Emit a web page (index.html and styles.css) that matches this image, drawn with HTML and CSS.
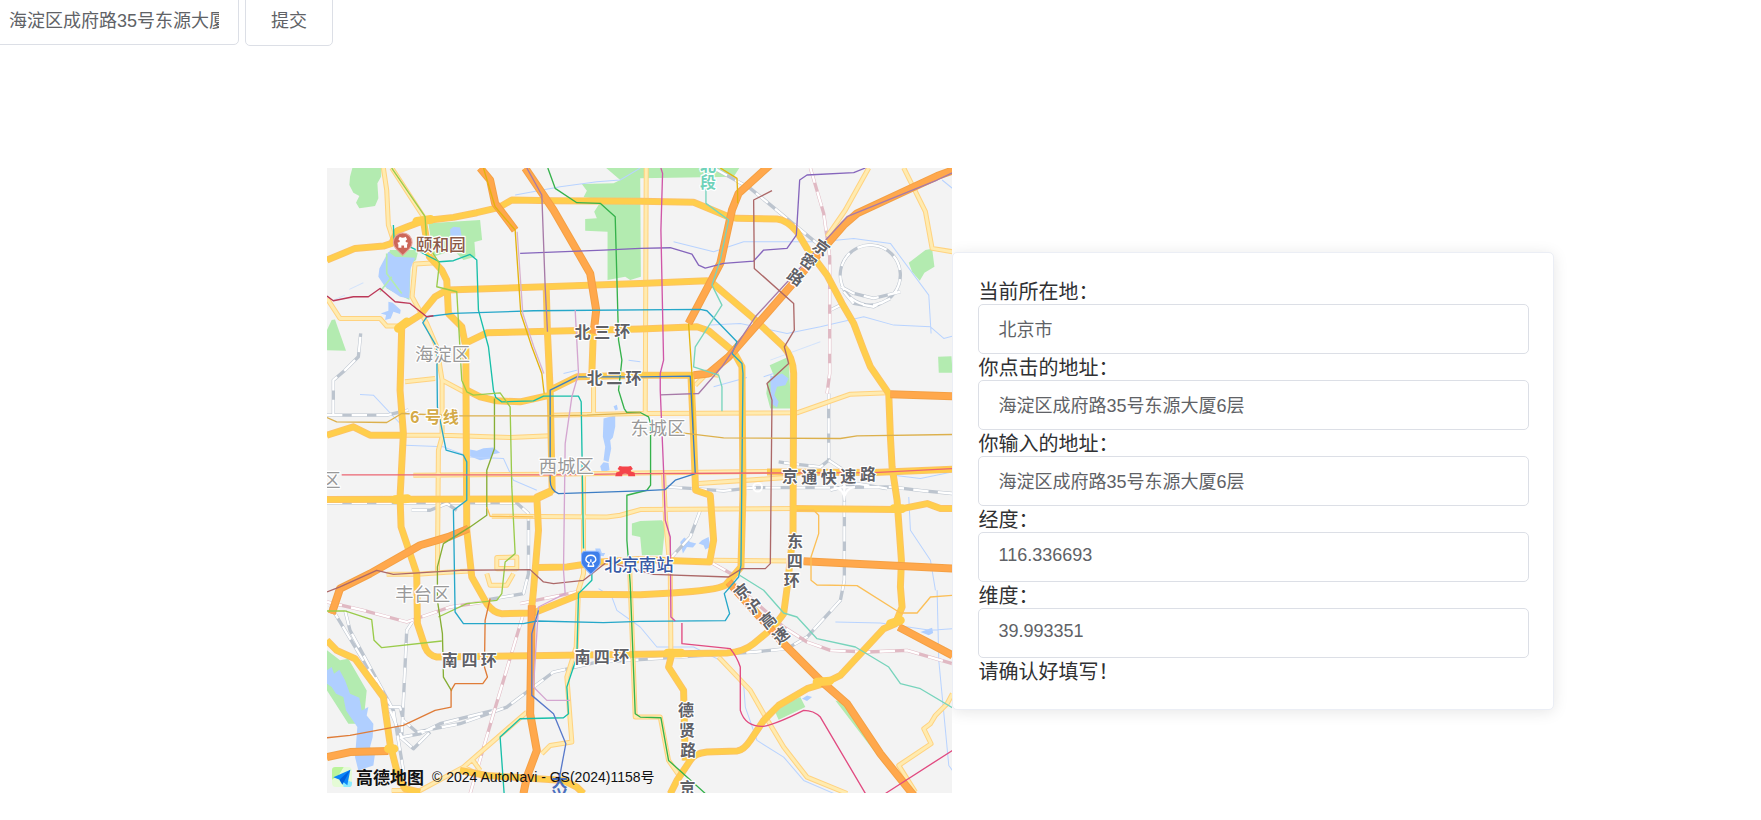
FILE: index.html
```html
<!DOCTYPE html>
<html lang="zh-CN">
<head>
<meta charset="utf-8">
<title>地址选择</title>
<link rel="stylesheet" href="styles.css">
</head>
<body>
<form class="search">
  <input class="field search-field" type="text" aria-label="地址" value="海淀区成府路35号东源大厦6层">
  <button class="search-button" type="button">提交</button>
</form>
<main class="content">
  <section class="map" aria-label="地图">
    <svg class="map-canvas" viewBox="21 24 1875 1875" role="img" aria-label="北京市地图">
      <defs>
        <g id="minor">
          <path d="M190 24L200 90L205 195L218 235M215 24L310 170M21 415L60 475L180 475L200 498L245 498M350 308L285 312L276 410L320 490L350 560L366 660L366 830L355 870L352 1235M255 665L345 655M366 660L435 697M255 825L370 825L570 832L690 827M695 765L960 760L1430 758L1590 702L1705 698M978 24L975 760M280 945L690 942L960 938L1400 933M515 1068L860 1070L900 1065L960 1048L1420 1045M790 945L790 1240L775 1290L768 1460L740 1550L755 1745L690 1755L665 1780M1030 940L1036 1080L1050 1230L1052 1480M927 1190L945 1670L1020 1670L1045 1800L1080 1850M1195 1490L1290 1590L1330 1660L1390 1760L1460 1850L1580 1899M1645 24L1575 150L1520 230M1750 24L1815 155L1835 265L1896 275M1896 1600L1880 1630L1845 1665L1830 1690L1810 1705L1832 1750L1735 1815L1785 1895M820 645L820 760M200 1242L292 1242L380 1236L450 1232M1135 970L1400 952M1180 1200L1415 1202M530 1192L590 1190L590 1225L530 1225ZM500 1240L510 1275L560 1275L580 1240M215 1890L300 1890L430 1820L620 1655M430 1820L490 1850M455 1795L480 1830M1125 675L1160 640L1195 645"/>
        </g>
        <g id="major">
          <path d="M21 300L105 265L190 258L215 250L232 212L262 200L310 182L400 172L470 158L535 143L575 120L700 122L960 124L1120 127L1225 170L1250 175L1370 177Q1400 180 1430 215L1460 265L1520 345L1565 430L1600 490L1630 570L1650 620L1705 700L1710 830L1715 920L1730 1020L1743 1200L1740 1280L1745 1340L1725 1390L1690 1405L1560 1545L1510 1570L1460 1585L1375 1635L1330 1680L1290 1740Q1270 1770 1250 1772L1160 1775Q1120 1780 1110 1800L1070 1860L1050 1900"/>
          <path d="M245 500L240 690L250 820L240 1010L243 1100L290 1240L292 1390L315 1460Q325 1485 350 1490L960 1482L1220 1478Q1270 1475 1300 1450L1360 1400L1390 1360L1402 1270L1418 1120L1420 640Q1418 590 1390 560L1300 475L1175 368L1160 362L960 370L380 390L345 410L300 465Z"/>
          <path d="M310 182L328 290L365 330L380 360L385 460L425 500L435 550L500 518L960 507L1130 500L1165 512L1240 575L1265 620L1268 1000L1262 1220L1215 1275Q1190 1290 1055 1298L960 1303L780 1302L640 1358L545 1360Q520 1358 500 1330L455 1250L440 1110L437 550"/>
          <path d="M690 690L770 650L960 645L1112 645L1118 780L1126 990L1170 1005L1180 1140L1168 1205L960 1198L840 1205L740 1220L655 1222M690 690L696 990L650 1010L655 1110L640 1290L635 1340M21 1018L650 1016L694 995M21 825L100 800L150 825L245 825M440 690L480 710L530 722L600 725L690 705M678 378L682 520L690 690M820 500L815 640M1420 1045L1730 1048L1820 1030L1860 1045L1896 1045M1340 935L1660 937L1896 927M21 1440L50 1470L105 1495L190 1610L210 1750L235 1850L255 1885L300 1895M420 1830L500 1845L730 1860L770 1880L790 1899M1055 1480L1045 1520L1090 1590L1095 1800"/>
        </g>
        <g id="express">
          <path d="M480 24L510 60L525 130L585 210M615 24L700 150L810 340L828 450L820 520M1350 14L1255 100L1235 150L1200 310L1105 490M1120 645L1165 640L1225 590L1340 460L1570 195L1610 160L1850 48L1900 30M445 1105L385 1130L300 1155L150 1240L60 1285L35 1360M21 1790L90 1775L205 1772M635 1335L630 1660L650 1770L620 1850L610 1899M1710 702L1896 708M1450 1203L1896 1225M1225 1265L1390 1450L1500 1560L1580 1630L1680 1780L1780 1905M1735 1400L1896 1485"/>
        </g>
        <g id="rail">
          <path d="M1180 24L1290 85L1490 250M1655 255A90 90 0 1 1 1565 375A90 90 0 0 1 1655 255M1562 380L1600 400L1660 415L1740 395M1570 395L1600 430L1660 440L1710 415M1530 450L1570 430M1525 700L1525 900L1500 920L1410 910L1375 905M1525 900L1570 930L1572 980L1572 1260L1560 1320L1460 1430L1400 1465L1300 1475L960 1498L830 1505L700 1535L560 1640L420 1690L290 1715L250 1680M1040 980L1120 985L1210 992L1300 982L1540 982L1710 980L1810 992L1896 1000M1530 990L1610 970L1700 985M21 765L200 765L265 750M40 765L40 660L75 630L115 590L122 520M21 1028L590 1028L625 1060L625 1240L610 1300L490 1320M275 1050L330 1050L380 1030L410 1050M30 1335L220 1650L250 1830M75 1350L90 1410L215 1640M280 1380L260 1410L245 1730M210 1650L245 1730L300 1720L360 1690L520 1650M240 1730L280 1765L330 1715M205 1640L240 1640L250 1680M1140 1050L1110 1130L1055 1190"/>
        </g>
        <g id="rail-pink">
          <path d="M1470 24L1510 160L1528 290L1528 640L1520 700M21 1325L130 1350L260 1385L390 1340L490 1325M600 1330L770 1295M610 1360L520 1660L450 1900M1230 1260L1390 1400L1460 1445L1530 1470L1640 1475L1760 1470L1896 1510M1175 1208L1250 1250"/>
        </g>
      </defs>

      <rect class="land" x="21" y="24" width="1875" height="1875"/>
      <g class="park">
        <path d="M97 24L185 24L183 50L172 70L175 115L165 138L140 142L118 145L108 128L118 108L100 98L88 75L90 50Z"/>
        <path d="M325 190L480 180L486 240L463 246L466 290L430 300L400 270L340 290Z"/>
        <path d="M210 270L295 270L288 300L272 312L268 420L200 385L185 330Z"/>
        <path d="M785 72L880 70L900 60L858 24L1257 24L1240 50L960 55L962 350L930 360L915 350L862 360L862 215L795 212L795 177L830 175L822 155L835 135L845 118L790 112L800 92Z"/>
        <path d="M35 480L45 478L78 572L21 570L21 510Z"/>
        <path d="M1765 308L1815 270L1835 266L1842 320L1812 338L1798 362L1775 335Z"/>
        <path d="M1853 590L1893 588L1896 638L1855 638Z"/>
        <path d="M1348 615L1405 590L1412 745L1350 745L1338 700L1342 665L1360 645Z"/>
        <path d="M935 1090L960 1082L1025 1080L1035 1095L1026 1185L965 1185L960 1130L935 1125Z"/>
        <path d="M21 1470L60 1500L85 1495L140 1590L130 1690L85 1690L21 1590Z"/>
        <path d="M1360 1645L1440 1610L1455 1640L1375 1678Z"/>
        <path d="M1545 1620L1585 1630L1640 1715L1735 1860L1690 1810Z"/>
      </g>
      <g class="water">
        <path d="M390 208L400 200L420 202L425 230L420 252L392 252ZM205 275L225 290L285 293L270 330L268 415L240 410L195 380L175 350L178 325ZM205 425L218 428L242 450L240 462L220 455L212 475L195 480L198 465L182 460L205 452Z"/>
        <path d="M850 775L885 765L885 800L878 832L870 840L873 865L865 905L850 900L855 860L848 830ZM840 918L850 906L865 908L868 930L845 936ZM450 868L470 872L490 864L520 862L540 878L520 882L510 895L480 900L450 888Z"/>
        <path d="M1350 645L1362 650L1385 640L1405 655L1395 675L1370 680L1362 705L1375 725L1370 742L1352 730ZM1080 1145L1092 1132L1110 1145L1128 1150L1118 1162L1100 1160L1088 1180ZM1135 1150L1145 1140L1165 1130L1170 1160L1155 1168L1150 1155Z"/>
        <path d="M21 1530L35 1520L42 1540L58 1528L75 1560L90 1600L118 1612L125 1650L145 1640L140 1665L160 1690L158 1730L150 1760L165 1780L160 1815L115 1830L105 1790L112 1700L78 1650L70 1610L48 1600L35 1580L21 1570Z"/>
        <path d="M825 1165L840 1165L845 1178L855 1178L850 1188L830 1185ZM1800 1415L1835 1402L1838 1418L1825 1425ZM1445 1615L1460 1605L1475 1610L1460 1622ZM880 738L890 734L893 748L885 750Z"/>
      </g>
      <path class="pond-path" d="M200 280L200 340L245 400M215 350L180 395"/>
      <path class="stream" d="M585 105L720 80L830 65L900 60L960 24M1060 245L1180 275L1270 245L1500 245L1600 235L1710 250L1825 405L1832 520M1170 495L1260 490L1400 520L1500 500L1630 470L1720 495L1830 500L1870 535L1896 528M120 703L160 705L240 790M255 855L370 860L450 890L550 895L580 960L650 990M730 640L770 630M1720 945L1800 955L1896 935M1765 1010L1770 1110L1830 1200L1845 1290M1545 1385L1680 1388L1830 1410L1896 1405M1850 1290L1855 1500L1885 1815L1896 1830M960 1400L1010 1460L1120 1460L1200 1500L1270 1570L1275 1640L1310 1740L1390 1790L1450 1860L1540 1899M835 1285L875 1310L890 1350L960 1400M1865 60L1896 85M925 600L960 605M1330 650L1360 640M1180 680L1280 652"/>
      <path class="stream faint" d="M40 420L75 405M88 388L130 368M1350 600L1500 545"/>
      <use class="rail-bed" href="#rail"/><use class="rail-dash" href="#rail"/>
      <use class="rail-bed pink" href="#rail-pink"/><use class="rail-dash" href="#rail-pink"/>
      <circle class="rail-loop" cx="1312" cy="981" r="13"/>
      <path class="rail-loop" d="M1540 980Q1572 985 1572 1020Q1572 985 1604 980M1572 960V1020"/>
      <use class="minor-case" href="#minor"/><use class="minor-fill" href="#minor"/>
      <use class="major-case" href="#major"/><use class="major-fill" href="#major"/>
      <use class="express-case" href="#express"/><use class="express-fill" href="#express"/>
      <path class="junction" d="M290 184L332 178M235 505L260 485M225 1018L262 1015M1042 1478L1083 1478M1710 1390L1740 1380M1490 1565L1528 1562M205 1765L222 1765M1720 1045L1745 1045"/>

      <g class="metro">
        <path stroke="#17bfa9" d="M220 195L222 238L300 275L358 305L400 302L450 283L470 300L475 450L505 560L520 690L527 712L545 725L640 722L670 708L775 708L783 725L790 1165M815 1235L815 1260L775 1300L770 1490L740 1580L745 1660L730 1672L600 1675L540 1730L552 1899"/>
        <path stroke="#35b24b" d="M683 24L705 85L770 128L840 130L885 170L895 540L905 600L895 690L912 745L920 757L960 757L985 770L991 790L991 975L980 990L920 1005L920 1140L930 1270L945 1660L960 1670L1022 1672L1045 1800L1155 1899"/>
        <path stroke="#9acb4a" d="M215 24L315 170L320 250L358 310L350 380L410 395L425 660L440 695L460 705L540 698L570 740L575 980L585 1180L555 1205L545 1300L530 1320L440 1330L355 1370M21 1352L75 1352L155 1378L162 1440L185 1462L365 1442"/>
        <path stroke="#86ae35" d="M523 715L523 865L500 930L500 1065L450 1100L370 1150L352 1220L352 1320L367 1420L370 1550L395 1592"/>
        <path stroke="#df7c38" d="M510 1315L495 1380L493 1520L502 1550L488 1570L405 1570L393 1590L393 1640L345 1650L250 1695L90 1725L21 1732"/>
        <path stroke="#25a7c9" d="M320 470L308 488L350 560L352 740L372 840L378 870L430 885L440 905L440 1020L400 1050L405 1355L430 1390L610 1390L650 1382L850 1387L960 1383L1215 1381L1228 1360L1212 1300L1255 1250L1262 1215L1268 640L1265 610L1235 580L1250 545L1160 452L1140 448L640 452L400 460Z"/>
        <path stroke="#bc3858" d="M21 408L40 422L100 410L145 410L180 385L225 425L270 430L320 470L340 467"/>
        <path stroke="#8565bc" d="M600 280L850 270L960 265L1050 263L1115 282L1135 315L1155 324L1210 310L1300 303L1330 270L1400 265L1428 225L1438 60L1460 45L1600 38L1635 24"/>
        <path stroke="#a77aa8" d="M620 24L665 105L675 380L682 515M1020 704L1135 700L1205 620L1305 470L1580 170L1850 60L1896 38"/>
        <path stroke="#cf56a8" d="M1022 24L1027 40L1022 210L1030 600L1020 640L1020 690L1030 930L1035 1080L1050 1130L1052 1370L1065 1382"/>
        <path stroke="#e14a80" d="M1085 1388L1085 1450L1230 1465Q1250 1490 1260 1520L1260 1650Q1275 1700 1330 1698Q1370 1690 1450 1650Q1480 1650 1500 1670L1635 1899M1695 1899L1896 1770"/>
        <path stroke="#d9b3cf" d="M591 215L608 460L641 560L671 640"/>
        <path stroke="#e3b30d" d="M1200 24L1250 55L1252 100L1252 130M1105 490L1115 640L1120 810M490 24L525 140L585 210L602 460L635 560L665 640L672 700"/>
        <path stroke="#77d4bc" d="M1157 60L1157 130L1225 180L1200 300L1175 375L1205 435L1125 560L1120 620L1195 645L1205 680L1205 753M1258 1245L1330 1290L1390 1358L1430 1370L1490 1435L1605 1460L1705 1520L1740 1570L1800 1585L1896 1642"/>
        <path stroke="#ac6868" d="M1355 92L1300 120L1302 325L1420 430L1422 510L1392 560L1405 610L1340 670L1355 720L1350 1210L1335 1225L1265 1225L1225 1250L1000 1242L860 1205L790 1260L700 1270L670 1265L630 1228L420 1230L220 1242L170 1230L60 1280L21 1295"/>
        <path stroke="#3c7dc4" d="M690 690L770 650L960 650L1110 648L1125 940L1065 960L1035 988L960 992L715 1000Q690 990 690 960Z"/>
        <path stroke="#eb6673" d="M65 944L700 944L960 940L1660 937L1896 925"/>
        <path stroke="#dcb04c" d="M21 772L50 785L200 787L245 760L420 767L690 767L800 765L960 758M1060 815L1210 833L1560 835L1610 827L1896 823"/>
        <path stroke="#fbbf57" d="M500 1040L510 1068L640 1070M1430 1050L1480 1050L1495 1065L1495 1120L1472 1190L1472 1260L1490 1274L1610 1276L1740 1358L1790 1358L1830 1310L1896 1305"/>
        <path stroke="#d4a6d0" d="M765 450L775 640L755 710L735 850L730 1230L735 1300L655 1340L640 1580L680 1620L750 1620"/>
        <path stroke="#5879ca" d="M655 1350L635 1420L635 1605L700 1660L737 1750L720 1840"/>
      </g>

      <g class="landmark">
        <path fill="#cc675a" stroke="#e7a49a" stroke-width="3" d="M248 286L230 268A28 28 0 1 1 266 268Z"/>
        <path fill="#fff" d="M239 230Q248 236 257 230L261 238L257 241V246L264 248L261 254V263H252V256H244V263H235V254L232 248L239 246V241L235 238Z"/>
        <path fill="#3e7eea" stroke="#8ab4ff" stroke-width="3" d="M796 1173L828 1173Q840 1173 840 1185L840 1208Q840 1215 812 1242Q784 1215 784 1208L784 1185Q784 1173 796 1173Z"/>
        <path fill="none" stroke="#fff" stroke-width="4" d="M803 1218L807 1208Q797 1204 797 1198Q798 1185 812 1185Q826 1185 827 1198Q827 1204 817 1208L821 1218M802 1218H822M812 1197V1206"/>
        <path fill="#f4444a" d="M898 917Q915 921 932 917L938 926L932 930V934L943 937L945 948H924V943Q915 934 906 943V948H885L888 937L898 934V930L892 926Z"/>
      </g>

      <g class="district">
        <text x="285" y="602">海淀区</text>
        <text x="656" y="938">西城区</text>
        <text x="931" y="824">东城区</text>
        <text x="226" y="1323">丰台区</text>
        <text x="62" y="980" text-anchor="end">区</text>
      </g>
      <text class="poi" x="287" y="274">颐和园</text>
      <text class="station" x="852" y="1231">北京南站</text>
      <text class="line-name" x="270 315 368" y="788">6号线</text>
      <text class="mint-name" x="1139" y="34">北</text>
      <text class="mint-name" x="1139" y="84">段</text>
      <text class="rail-name" x="694 694" y="1880 1926">大兴</text>
      <g class="road-name">
        <text x="763 822 882" y="535 534 532">北三环</text>
        <text x="800 858 916" y="673">北二环</text>
        <text x="1385 1443 1501 1560 1619" y="964 967 967 965 960">京通快速路</text>
        <text x="365 424 482" y="1516">南四环</text>
        <text x="763 821 879" y="1509 1507 1505">南四环</text>
        <text x="1400 1399 1390" y="1160 1220 1277">东四环</text>
        <text x="1073 1076 1080" y="1668 1728 1786">德贤路</text>
        <text x="1078" y="1902">京</text>
        <text transform="rotate(35 1503 263)" x="1479" y="280">京</text>
        <text transform="rotate(35 1463 305)" x="1439" y="322">密</text>
        <text transform="rotate(35 1426 352)" x="1402" y="369">路</text>
        <text transform="rotate(-38 1266 1295)" x="1242" y="1312">京</text>
        <text transform="rotate(-38 1303 1338)" x="1279" y="1355">沪</text>
        <text transform="rotate(-38 1343 1381)" x="1319" y="1398">高</text>
        <text transform="rotate(-38 1382 1426)" x="1358" y="1443">速</text>
      </g>
    </svg>
    <div class="attribution">
      <svg class="brand-mark" viewBox="0 0 60 60" aria-hidden="true">
        <rect width="60" height="60" rx="12" fill="#e5fbd6"/>
        <path fill="#baf49b" d="M10 0H35L20 25L0 38V10Q0 0 10 0Z"/>
        <path fill="#8cebff" d="M28 35L60 45V50Q60 60 50 60H35Z"/>
        <path fill="#0c86f8" d="M55 8L4 31L27 40L46 55Z"/>
        <path fill="#0060dc" d="M55 8L22 38L31 53Z"/>
      </svg>
      <span class="brand-name">高德地图</span>
      <span class="copyright">© 2024 AutoNavi - GS(2024)1158号</span>
    </div>
  </section>
  <form class="card">
    <label class="label" for="city">当前所在地：</label>
    <input class="field" id="city" type="text" value="北京市">
    <label class="label" for="clicked">你点击的地址：</label>
    <input class="field" id="clicked" type="text" value="海淀区成府路35号东源大厦6层">
    <label class="label" for="typed">你输入的地址：</label>
    <input class="field" id="typed" type="text" value="海淀区成府路35号东源大厦6层">
    <label class="label" for="lng">经度：</label>
    <input class="field" id="lng" type="text" value="116.336693">
    <label class="label" for="lat">维度：</label>
    <input class="field" id="lat" type="text" value="39.993351">
    <p class="label">请确认好填写！</p>
  </form>
</main>
</body>
</html>
```
FILE: styles.css
```css
* { box-sizing: border-box; }

body {
  margin: 0;
  background: #fff;
  color: #303133;
  font-family: "Liberation Sans", "Noto Sans CJK SC", sans-serif;
  overflow-x: hidden;
}

.search {
  display: flex;
  align-items: flex-start;
  gap: 6px;
  margin: -5px 0 0 -11px;
}

.field,
.search-button {
  height: 50px;
  border: 1px solid #dcdfe6;
  border-radius: 5px;
  background: #fff;
  color: #606266;
  font: 18px "Liberation Sans", "Noto Sans CJK SC", sans-serif;
}

.field {
  display: block;
  width: 100%;
  padding: 0 19px 2px;
}

.search-field { width: 250px; }

.search-button {
  height: 51px;
  padding: 0 25px 4px;
}

.content {
  display: grid;
  grid-template-columns: 625fr 601fr;
  align-items: center;
  margin-top: 122px;
  padding: 0 11.76% 0 18.57%;
}

.map {
  position: relative;
  overflow: hidden;
}

.map-canvas {
  display: block;
  width: 100%;
}

.land { fill: #f3f3f3; }
.park { fill: #b3ebb0; }
.water { fill: #b0cfff; }

.pond-path,
.stream,
.metro,
.junction,
.rail-bed,
.rail-dash,
.rail-loop,
.minor-case,
.minor-fill,
.major-case,
.major-fill,
.express-case,
.express-fill {
  fill: none;
  stroke-linejoin: round;
}

.pond-path { stroke: #b3ebb0; stroke-width: 5; }
.stream { stroke: #b8d3ff; stroke-width: 3; }
.stream.faint { stroke: #d3e3fb; }
.rail-bed { stroke: #bcc4ce; stroke-width: 10; }
.rail-bed.pink { stroke: #e0b9c3; }
.rail-dash { stroke: #fff; stroke-width: 7; stroke-dasharray: 46 28; }
.rail-loop { stroke: #fff; stroke-width: 6; }
.minor-case { stroke: #ffd27f; stroke-width: 15; }
.minor-fill { stroke: #ffebb0; stroke-width: 9; }
.major-case { stroke: #fcc266; stroke-width: 21; }
.major-fill { stroke: #ffce4c; stroke-width: 16; }
.express-case { stroke: #f4a045; stroke-width: 24; }
.express-fill { stroke: #ffa84c; stroke-width: 18; }
.junction { stroke: #ffce4c; stroke-width: 26; stroke-linecap: round; }
.metro { stroke-width: 4; }

.map-canvas text {
  font-family: "Noto Sans CJK SC", sans-serif;
  font-size: 48px;
  font-weight: 700;
  paint-order: stroke;
  stroke: #fff;
  stroke-width: 7px;
  stroke-linejoin: round;
}

.map-canvas .district text {
  fill: #999;
  font-size: 55px;
  font-weight: 400;
}

.road-name { fill: #606167; }

.map-canvas .poi {
  fill: #8b5a48;
  font-size: 50px;
  font-weight: 500;
}

.map-canvas .station {
  fill: #375aa5;
  font-size: 52px;
  font-weight: 500;
}

.line-name { fill: #d4aa48; }
.mint-name { fill: #6fd2b9; }

.map-canvas .rail-name {
  fill: #4b6fbe;
  stroke: none;
}

.attribution {
  position: absolute;
  left: 5px;
  bottom: 6px;
  display: flex;
  align-items: center;
  height: 20px;
  color: #111;
  white-space: nowrap;
}

.brand-mark { width: 20px; height: 20px; }

.brand-name {
  margin: 0 8px 0 4px;
  font: 700 17px/20px "Noto Sans CJK SC", sans-serif;
}

.copyright { font-size: 14px; line-height: 20px; }

.card {
  padding: 25px 24px 25px 25px;
  border: 1px solid #ebeef5;
  border-radius: 5px;
  background: #fff;
  box-shadow: 0 2px 15px rgba(0, 0, 0, 0.1);
}

.label {
  display: block;
  margin: 0;
  padding-top: 3px;
  font-size: 20px;
  line-height: 23px;
}
```
